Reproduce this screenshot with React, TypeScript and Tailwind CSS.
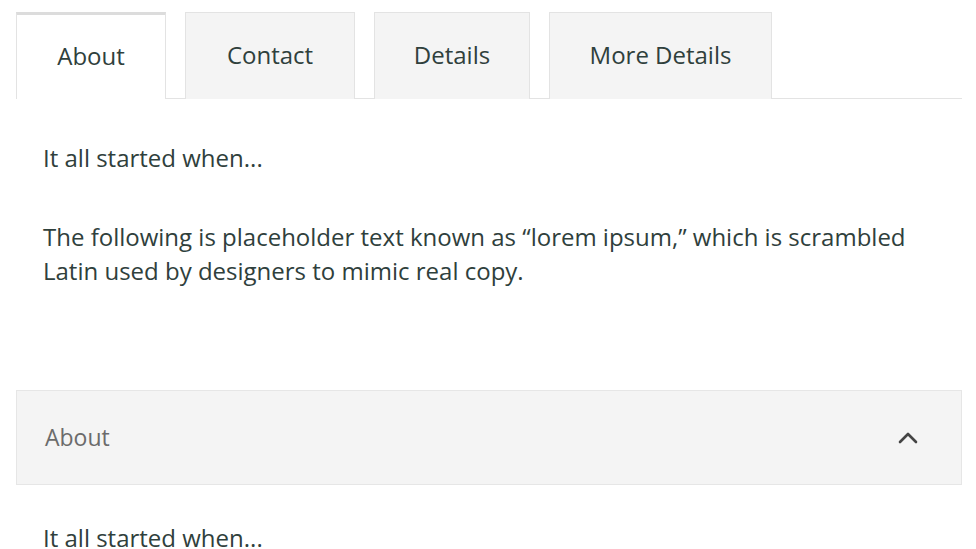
import { useState } from "react";

const tabs = ["About", "Contact", "Details", "More Details"];
const tabWidths = ["w-[150px]", "w-[170px]", "w-[156px]", "w-[223px]"];

export default function App() {
  const [active, setActive] = useState(0);
  const [open, setOpen] = useState(true);

  return (
    <div className="min-h-screen bg-white text-[#2f403c] overflow-hidden" style={{ fontFamily: '"Open Sans", "Liberation Sans", sans-serif' }}>
      <div className="pl-4 pr-[14px] pt-3">
        <div className="flex gap-[19px] border-b border-[#e3e3e3]">
          {tabs.map((t, i) => (
            <button
              key={t}
              onClick={() => setActive(i)}
              className={
                "h-[87px] text-[24px] pb-[2px] border border-b-0 -mb-px " +
                tabWidths[i] + " " +
                (i === active
                  ? "bg-white border-[#e3e3e3] border-t-[3px] border-t-[#dcdcdc]"
                  : "bg-[#f4f4f4] border-[#e3e3e3]")
              }
            >
              {t}
            </button>
          ))}
        </div>
        <div className="px-[27px] pt-[42px] text-[24px]">
          <p className="leading-[34px]">It all started when...</p>
          <p className="leading-[34px] mt-[45px]">
            The following is placeholder text known as “lorem ipsum,” which is scrambled
            <br />
            Latin used by designers to mimic real copy.
          </p>
        </div>
        <div className="mt-[102px]">
          <button
            onClick={() => setOpen(!open)}
            className="w-full h-[95px] flex items-center justify-between bg-[#f4f4f4] border border-[#e6e6e6] pl-[28px] pr-[42px] text-[23px] text-[#6b6b6b]"
          >
            <span>About</span>
            <svg width="22" height="14" viewBox="0 0 22 14" fill="none" stroke="#444" strokeWidth="2.6" strokeLinecap="round" strokeLinejoin="round" className={open ? "" : "rotate-180"}>
              <path d="M3 11 L11 3 L19 11" />
            </svg>
          </button>
          {open && (
            <div className="px-[27px] pt-[36px] text-[24px]">
              <p className="leading-[34px]">It all started when...</p>
            </div>
          )}
        </div>
      </div>
    </div>
  );
}
